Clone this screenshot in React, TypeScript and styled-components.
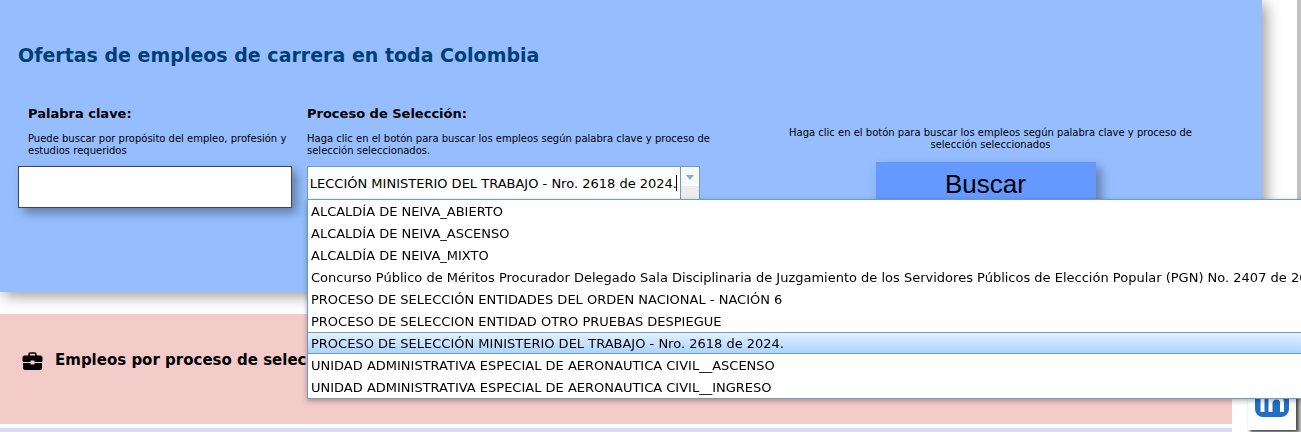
import React, { useEffect, useRef } from "react";
import styled, { createGlobalStyle, css } from "styled-components";

const GlobalStyle = createGlobalStyle`
  *, *::before, *::after { box-sizing: border-box; }
  html { background: #fff; }
  body {
    margin: 0;
    font-family: Verdana, "DejaVu Sans", sans-serif;
    color: #000;
    overflow: hidden;
  }
`;

const Page = styled.main`
  min-height: 100vh;
  overflow: hidden;
  background: linear-gradient(#c0c0c0, #c0c0c0) right / 4px 100% no-repeat;
`;

const SearchPanel = styled.section`
  height: 292px;
  margin-right: 39px;
  padding: 43px 18px 0;
  background: #96beff;
  box-shadow: 4px 4px 14px rgba(0, 0, 0, 0.4);
`;

const Title = styled.h1`
  margin: 0;
  font-size: 19px;
  line-height: 24px;
  color: #003e76;
`;

const SearchForm = styled.form`
  display: grid;
  grid-template-columns: 274px 412px minmax(0, 1fr);
  column-gap: 15px;
  margin-top: 39px;
`;

const Field = styled.div`
  display: flex;
  flex-direction: column;
`;

const FieldLabel = styled.label<{ $indent?: boolean }>`
  padding-left: ${(p) => (p.$indent ? 10 : 0)}px;
  font-size: 13px;
  line-height: 16px;
  font-weight: bold;
`;

const Hint = styled.p<{ $indent?: boolean }>`
  width: max-content;
  max-width: 430px;
  margin: 11px 0 0;
  padding-left: ${(p) => (p.$indent ? 10 : 0)}px;
  font-size: 10px;
  line-height: 12px;
  white-space: pre-line;
`;

const KeywordInput = styled.input`
  height: 42px;
  margin-top: 9px;
  padding: 0 8px;
  border: 1px solid #444;
  background: #fff;
  box-shadow: 5px 5px 10px rgba(0, 0, 0, 0.35);
  font: 13px Verdana, "DejaVu Sans", sans-serif;
`;

const Combo = styled.div`
  position: relative;
  display: flex;
  width: 393px;
  height: 38px;
  margin-top: 9px;
  border: 1px solid #6f9ac2;
  background: #fff;
`;

const ComboInput = styled.input`
  flex: 1;
  min-width: 0;
  height: 33px;
  padding: 0 3px 0 2px;
  border: 0;
  outline: 0;
  background: transparent;
  font: 13px Verdana, "DejaVu Sans", sans-serif;
`;

const Caret = styled.span`
  position: absolute;
  top: 8px;
  right: 22px;
  width: 1px;
  height: 16px;
  background: #000;
`;

const ComboTrigger = styled.button`
  display: flex;
  justify-content: center;
  width: 19px;
  padding: 8px 0 0;
  border: 0;
  border-left: 1px solid #6f9ac2;
  background: linear-gradient(#f8f8f8 0 18px, #fff 18px 19px, #ececec 19px);
`;

const Options = styled.ul`
  position: absolute;
  z-index: 2;
  top: 32px;
  left: -1px;
  width: 1010px;
  margin: 0;
  padding: 0;
  border: 1px solid #6f9ac2;
  background: #fff;
  box-shadow: 0 2px 5px rgba(0, 0, 0, 0.3);
  list-style: none;
`;

const Option = styled.li<{ $selected?: boolean }>`
  height: 22px;
  padding: 2px 3px 0;
  font-size: 13px;
  line-height: 20px;
  white-space: nowrap;
  ${(p) =>
    p.$selected &&
    css`
      background: linear-gradient(#e6f2ff, #a9d3fd);
      box-shadow: inset 0 1px #6f9ac2, inset 0 -1px #6f9ac2;
    `}
`;

const Actions = styled.div`
  display: flex;
  flex-direction: column;
  align-items: center;
  padding: 10px 7px 0 0;
  text-align: center;
`;

const SubmitButton = styled.button`
  width: 220px;
  height: 44px;
  margin-top: 11px;
  padding: 0;
  border: 0;
  background: #6699ff;
  box-shadow: 5px 5px 10px rgba(0, 0, 0, 0.35);
  font: 26px "Liberation Sans", Arial, sans-serif;
  color: #000;
`;

const ProcessPanel = styled.section`
  display: flex;
  align-items: flex-start;
  gap: 12px;
  height: 110px;
  margin: 22px 69px 0 0;
  padding: 36px 22px 0;
  background: #f3cbc9;
`;

const ProcessTitle = styled.h2`
  margin: 0;
  font-size: 15px;
  line-height: 20px;
`;

const BriefcaseIcon = styled.svg`
  width: 21px;
  height: 18px;
  margin-top: 2px;
`;

const NextPanel = styled.section`
  height: 60px;
  margin: 4px 69px -56px 0;
  background: #d7dcf4;
`;

const SocialLink = styled.a`
  position: fixed;
  right: 5px;
  bottom: 2px;
  display: flex;
  justify-content: center;
  width: 48px;
  height: 60px;
  padding-top: 13px;
  background: #fff;
  box-shadow: 2px 2px 3px rgba(0, 0, 0, 0.8);
`;

const processes = [
  "ALCALDÍA DE NEIVA_ABIERTO",
  "ALCALDÍA DE NEIVA_ASCENSO",
  "ALCALDÍA DE NEIVA_MIXTO",
  "Concurso Público de Méritos Procurador Delegado Sala Disciplinaria de Juzgamiento de los Servidores Públicos de Elección Popular (PGN) No. 2407 de 2022",
  "PROCESO DE SELECCIÓN ENTIDADES DEL ORDEN NACIONAL - NACIÓN 6",
  "PROCESO DE SELECCION ENTIDAD OTRO PRUEBAS DESPIEGUE",
  "PROCESO DE SELECCIÓN MINISTERIO DEL TRABAJO - Nro. 2618 de 2024.",
  "UNIDAD ADMINISTRATIVA ESPECIAL DE AERONAUTICA CIVIL__ASCENSO",
  "UNIDAD ADMINISTRATIVA ESPECIAL DE AERONAUTICA CIVIL__INGRESO",
];
const selected = processes[6];

function ProcessCombo() {
  const input = useRef<HTMLInputElement>(null);

  // Long values are shown from their end, where typing continues.
  useEffect(() => {
    const el = input.current;
    if (el) el.scrollLeft = el.scrollWidth;
  }, []);

  return (
    <Combo>
      <ComboInput
        ref={input}
        id="process"
        role="combobox"
        aria-expanded="true"
        aria-controls="process-options"
        defaultValue={selected}
      />
      <Caret />
      <ComboTrigger type="button" aria-label="Mostrar opciones">
        <svg width="8" height="5" viewBox="0 0 8 5" aria-hidden="true">
          <path d="M0 0H8L4 5Z" fill="#86b0cf" />
        </svg>
      </ComboTrigger>
      <Options id="process-options" role="listbox">
        {processes.map((name) => (
          <Option key={name} role="option" aria-selected={name === selected} $selected={name === selected}>
            {name}
          </Option>
        ))}
      </Options>
    </Combo>
  );
}

export default function App() {
  return (
    <>
      <GlobalStyle />
      <Page>
        <SearchPanel>
          <Title>Ofertas de empleos de carrera en toda Colombia</Title>
          <SearchForm onSubmit={(e) => e.preventDefault()}>
            <Field>
              <FieldLabel htmlFor="keyword" $indent>Palabra clave:</FieldLabel>
              <Hint $indent>{"Puede buscar por propósito del empleo, profesión y\nestudios requeridos"}</Hint>
              <KeywordInput id="keyword" type="text" />
            </Field>
            <Field>
              <FieldLabel htmlFor="process">Proceso de Selección:</FieldLabel>
              <Hint>{"Haga clic en el botón para buscar los empleos según palabra clave y proceso de\nselección seleccionados."}</Hint>
              <ProcessCombo />
            </Field>
            <Actions>
              <Hint $indent>{"Haga clic en el botón para buscar los empleos según palabra clave y proceso de\nselección seleccionados"}</Hint>
              <SubmitButton type="submit">Buscar</SubmitButton>
            </Actions>
          </SearchForm>
        </SearchPanel>

        <ProcessPanel>
          <BriefcaseIcon viewBox="0 0 21 18" aria-hidden="true">
            <path
              d="M7 4V2.5Q7 1 8.5 1H12.5Q14 1 14 2.5V4"
              fill="none"
              stroke="#000"
              strokeWidth="1.6"
            />
            <path d="M2.500 3.500H18.500Q20.500 3.500 20.500 5.500V9L19.500 10H12.500V8.500H8.500V10H1.500L.5 9V5.500Q.5 3.500 2.500 3.500ZM1 11H8.500V12.500H12.500V11H20V16Q20 18 18 18H3Q1 18 1 16Z" />
          </BriefcaseIcon>
          <ProcessTitle>Empleos por proceso de selección</ProcessTitle>
        </ProcessPanel>
        <NextPanel />

        <SocialLink href="#" aria-label="LinkedIn">
          <svg width="34" height="34" viewBox="0 0 34 34" aria-hidden="true">
            <rect width="34" height="34" rx="8" fill="#1f6fc4" />
            <circle cx="7.500" cy="8" r="2.500" fill="#fff" />
            <path d="M5.500 13H9.500V29H5.500ZM13.500 13H17.500V15Q19 12.500 22 12.500Q29 12.500 29 20V29H25V20Q25 16.500 21.500 16.500T17.500 20V29H13.500Z" fill="#fff" />
          </svg>
        </SocialLink>
      </Page>
    </>
  );
}
